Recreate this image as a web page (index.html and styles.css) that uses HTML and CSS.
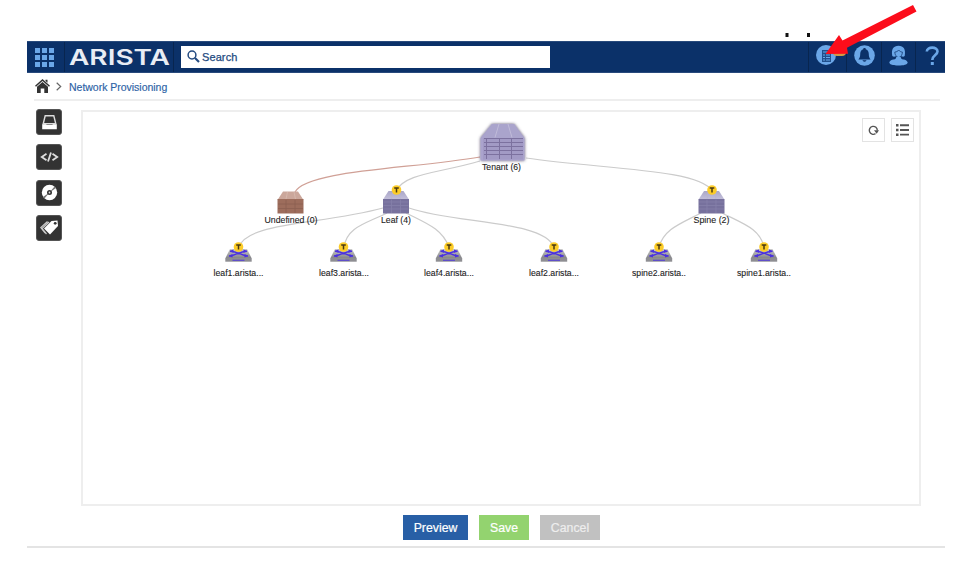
FILE: index.html
```html
<!DOCTYPE html>
<html lang="en">
<head>
<meta charset="utf-8">
<title>Network Provisioning</title>
<link rel="stylesheet" href="styles.css">
</head>
<body>
<div class="app">
  <header class="topbar">
    <div class="cell apps">
      <svg width="19" height="19" viewBox="0 0 19 19" fill="#6ba7e8"><path d="M0 0h5v5H0zM7 0h5v5H7zM14 0h5v5h-5zM0 7h5v5H0zM7 7h5v5H7zM14 7h5v5h-5zM0 14h5v5H0zM7 14h5v5H7zM14 14h5v5h-5z"/></svg>
    </div>
    <div class="cell brand">
      <svg width="108" height="30" viewBox="0 0 108 30"><text class="logo" x="4" y="22.500" textLength="101" lengthAdjust="spacingAndGlyphs">ARISTA</text></svg>
    </div>
    <div class="search">
      <svg width="13" height="13" viewBox="0 0 13 13" fill="none" stroke="#234a80"><circle cx="5" cy="5" r="3.900" stroke-width="1.500"/><path d="M8 8l4 4" stroke-width="2.200"/></svg>
      <span>Search</span>
    </div>
    <nav class="tools">
      <div class="cell tasks">
        <svg width="21" height="21" viewBox="0 0 21 21"><circle cx="10" cy="10" r="10" fill="#6ba7e8"/><path d="M6 5h9v12H6z" fill="#21508d"/><path d="M7 7h7M7 10h2m1 0h4M7 12.500h2m1 0h4M7 15h2m1 0h4" stroke="#6ba7e8"/></svg>
        <i class="badge"></i>
      </div>
      <div class="cell bell">
        <svg width="21" height="21" viewBox="0 0 21 21"><circle cx="10.500" cy="10.500" r="10.300" fill="#6ba7e8"/><path d="M10.500 3c.9 0 1.300.5 1.300 1.200 2.300.7 3 2.800 3 5.100 0 2.600.7 3.900 1.800 5.100H4.400c1.100-1.200 1.800-2.500 1.800-5.100 0-2.300.7-4.400 3-5.100C9.200 3.500 9.600 3 10.500 3zM8.500 15.300h4c-.2 1.900-3.800 1.900-4 0z" fill="#0b3169"/></svg>
      </div>
      <div class="cell user">
        <svg width="19" height="21" viewBox="0 0 19 21" fill="#6ba7e8"><path d="M.3 17.500c.5-2.500 4-3.500 9.200-3.500s8.700 1 9.200 3.500c-.5 2.300-4 3-9.200 3s-8.700-.7-9.200-3z"/><path d="M3.300 11C2 4 4.500.7 9.500.7S17 4 15.700 11c-1 .8-2 .8-3 .3h-6c-1.400.5-2.400.5-3.400-.3z"/><path d="M5.800 7c1.800 0 3-.7 3.900-2 .9 1.300 2 2 3.700 2 0 3-1.500 4.800-3.800 5.600C7.300 11.800 5.800 10 5.800 7z" stroke="#0b3169" stroke-width=".7"/><path d="M7.500 11.800h4l1.500 3.300-3.500 1.600L6 15.100z"/></svg>
      </div>
      <div class="cell help">
        <svg width="15" height="20" viewBox="0 0 15 20"><path d="M1.800 5.500C2 .4 12.600.2 12.500 5.500c0 3.500-5.200 3.500-5.200 8.500" fill="none" stroke="#6ba7e8" stroke-width="2.600"/><path d="M5.800 16h3v3h-3z" fill="#6ba7e8"/></svg>
      </div>
    </nav>
  </header>

  <div class="crumbs">
    <svg width="15" height="14" viewBox="0 0 15 14" fill="#333"><path d="M7.500 0l7.500 6.700-1 1.100-6.500-5.700L1 7.800 0 6.700zM10.500.8h2v3l-2-1.800zM7.500 3l5.500 4.700V14H9.300V9.500H5.700V14H2V7.700z"/></svg>
    <svg class="chevron" width="6" height="9" viewBox="0 0 6 9" fill="none" stroke="#666" stroke-width="1.200"><path d="M.7.800l4 3.700-4 3.700"/></svg>
    <a>Network Provisioning</a>
  </div>

  <main class="workspace">
    <aside class="side">
      <div class="tool"><svg width="17" height="17" viewBox="0 0 17 17"><path d="M4.200 1.800h8.600l2 8H2.200z" fill="#333" stroke="#ddd" stroke-width="1.400"/><path d="M1.200 10.200h3.900l.6.800h5.600l.6-.8h3.900v5H1.200z" fill="#fff"/></svg></div>
      <div class="tool"><svg width="19" height="12" viewBox="0 0 19 12" fill="none" stroke="#ddd" stroke-width="1.800"><path d="M6.500 2.800L1.800 6l4.700 3.200M12.500 2.800L17.200 6l-4.700 3.200M11 1.500l-3 9"/></svg></div>
      <div class="tool"><svg width="17" height="17" viewBox="0 0 17 17"><circle cx="8.500" cy="8.500" r="7.700" fill="#fff"/><path d="M8.500 8.500L15 4l-1.500-1.500zM8.500 8.500L2 13l1.500 1.500z" fill="#777"/><circle cx="8.500" cy="8.500" r="2.500" fill="#333"/><circle cx="8.500" cy="8.500" r=".9" fill="#ddd"/></svg></div>
      <div class="tool"><svg width="19" height="17" viewBox="0 0 19 17"><path d="M9 3L2 9.500 6.500 15M7.500 2.500L.8 8.500 5 14" fill="none" stroke="#ccc" stroke-width="1.200"/><path d="M11.500 2l6-.5.500 5.500-8 8.500L4 9.500z" fill="#fff"/><circle cx="15.200" cy="4.300" r="1.400" fill="#333"/></svg></div>
    </aside>

    <section class="canvas">
      <svg class="tree" viewBox="83 112 836 392">
        <defs>
          <linearGradient id="violet" x1="0" y1="0" x2="0" y2="1"><stop offset="0" stop-color="#aaa7c8"/><stop offset="1" stop-color="#c3bfda"/></linearGradient>
          <linearGradient id="metal" x1="0" y1="0" x2="0" y2="1"><stop offset="0" stop-color="#ccc"/><stop offset="1" stop-color="#858589"/></linearGradient>
          <filter id="glow" x="-20%" y="-20%" width="140%" height="140%"><feDropShadow dx="0" dy="0" stdDeviation="1.800" flood-color="#48415f" flood-opacity=".95"/></filter>
          <symbol id="rack" viewBox="0 0 27 23" overflow="visible">
            <path d="M6 0h15l5.500 8.500H.5z" fill="url(#violet)"/>
            <path d="M.5 8h26v14.500H.5z" fill="#77719d"/>
            <path d="M9 8.500v13.500M18 8.500v13.500M1 11h25M1 14.500h25M1 18h25" stroke="#8580aa" stroke-width=".8"/>
            <path d="M10.500.5L9 8M16.500.5L18 8" stroke="#b8b5d0" stroke-width=".7"/>
          </symbol>
          <symbol id="badge" viewBox="0 0 10 10" overflow="visible">
            <circle cx="5" cy="5" r="4.800" fill="#fccc28"/><path d="M2.700 3h4.600M5 3v4.500" stroke="#493a12" stroke-width="1.500"/>
          </symbol>
          <symbol id="switch" viewBox="0 0 27 19" overflow="visible">
            <path d="M5 6h17l4.500 9H.5z" fill="url(#metal)"/><path d="M.3 15h26.400v3.700H.3z" fill="#8e8e92"/>
            <path d="M4 13c6 0 10-4.800 18-4.800M5 8.200c8 0 12 4.800 18 4.800" fill="none" stroke="#4b31df" stroke-width="1.400"/>
            <path d="M3.500 13l4-2v3.500zM23.500 13l-4-2v3.500zM4.500 8l4-1.500v3.300zM22.500 8l-4-1.500v3.300z" fill="#4b31df"/>
            <path d="M7.500 17.300h12" stroke="#5c49d0" stroke-width="1.200"/>
            <use href="#badge" x="8.500" y="-1" width="10" height="10"/>
          </symbol>
        </defs>

        <g class="links">
          <path class="orphan" d="M480 157C410 169 307 170 295 192"/>
          <path d="M480 161C440 173 405 173 396 191"/>
          <path d="M526 158C600 169 700 169 712 191"/>
          <path d="M383 208C320 225 247 222 239 247"/>
          <path d="M387 213C365 224 347 227 344 247"/>
          <path d="M406 213C428 224 442 229 449 247"/>
          <path d="M409 208C455 224 543 220 554 247"/>
          <path d="M701 213C680 224 664 229 659 247"/>
          <path d="M722 213C744 224 760 229 764 247"/>
        </g>

        <g filter="url(#glow)">
          <path d="M492 124h22l10.500 14v22.500h-44V138z" fill="#aaa3cd"/>
          <path d="M492 124h22l9 14h-40z" fill="#aaa4cc"/>
          <path d="M499 124l-4 13.500M508 124l4 13.500" stroke="#c0bbd9"/>
          <path d="M483 138h40v21.500h-40z" fill="#a29ac5"/>
          <path d="M484 138.500h39M484 142.500h39M484 146.500h39M484 150.500h39M484 154.500h39M486.500 138v21M499.500 138v21M511.500 138v21" stroke="#7b719f"/>
        </g>

        <g>
          <path d="M283 191.500h15l5.500 8.500h-26z" fill="#cba79b"/>
          <path d="M277.500 199h26v14.500h-26z" fill="#9d6d5c"/>
          <path d="M286 200v13M295 200v13M278 204h25M278 208.500h25" stroke="#8c6051" stroke-width=".8"/>
          <path d="M287.500 192l-1.500 7M294 192l1.500 7" stroke="#dabdb2" stroke-width=".7"/>
        </g>
        <use href="#rack" x="382.500" y="191" width="27" height="23"/><use href="#badge" x="391.500" y="185" width="10" height="10"/>
        <use href="#rack" x="698" y="191" width="27" height="23"/><use href="#badge" x="707" y="185" width="10" height="10"/>
        <use href="#switch" x="225" y="243" width="27" height="19"/>
        <use href="#switch" x="330" y="243" width="27" height="19"/>
        <use href="#switch" x="435.500" y="243" width="27" height="19"/>
        <use href="#switch" x="540.500" y="243" width="27" height="19"/>
        <use href="#switch" x="645.500" y="243" width="27" height="19"/>
        <use href="#switch" x="750.500" y="243" width="27" height="19"/>

        <g class="labels">
          <text x="482" y="170" textLength="39" lengthAdjust="spacingAndGlyphs">Tenant (6)</text>
          <text x="264.500" y="223" textLength="53" lengthAdjust="spacingAndGlyphs">Undefined (0)</text>
          <text x="381" y="223" textLength="30" lengthAdjust="spacingAndGlyphs">Leaf (4)</text>
          <text x="693.500" y="223" textLength="36" lengthAdjust="spacingAndGlyphs">Spine (2)</text>
          <text x="213.500" y="276" textLength="50" lengthAdjust="spacingAndGlyphs">leaf1.arista...</text>
          <text x="319" y="276" textLength="50" lengthAdjust="spacingAndGlyphs">leaf3.arista...</text>
          <text x="424" y="276" textLength="50" lengthAdjust="spacingAndGlyphs">leaf4.arista...</text>
          <text x="529" y="276" textLength="50" lengthAdjust="spacingAndGlyphs">leaf2.arista...</text>
          <text x="632" y="276" textLength="54" lengthAdjust="spacingAndGlyphs">spine2.arista..</text>
          <text x="737" y="276" textLength="54" lengthAdjust="spacingAndGlyphs">spine1.arista..</text>
        </g>
      </svg>
      <div class="view-actions">
        <div class="action"><svg width="11" height="11" viewBox="0 0 11 11"><path d="M7.500 8.700A4 4 0 1 1 9.300 5.500" fill="none" stroke="#555" stroke-width="1.400"/><path d="M6 5.200h5L8.700 8.800z" fill="#555"/></svg></div>
        <div class="action"><svg width="13" height="12" viewBox="0 0 13 12" fill="#555"><path d="M0 0h2.500v2.500H0zM4 .3h9v1.900H4zM0 4.700h2.500v2.500H0zM4 5h9v1.900H4zM0 9.400h2.500v2.500H0zM4 9.700h9v1.900H4z"/></svg></div>
      </div>
    </section>
  </main>

  <footer class="buttons">
    <button class="preview">Preview</button>
    <button class="save">Save</button>
    <button class="cancel">Cancel</button>
  </footer>
</div>

<svg class="pointer" width="974" height="80" viewBox="0 0 974 80">
  <path d="M785.500 33h3v4h-3zM807 33h3v4h-3z" fill="#111"/>
  <path d="M913 5l3.500 6.500-69.500 36.300 1 6-22.500.2L839 35l3.500 5.500z" fill="#fc0d1b"/>
</svg>
</body>
</html>
```

FILE: styles.css
```css
* { box-sizing: border-box; }
body {
  margin: 0;
  background: #fff;
  font-family: "Liberation Sans", Arial, sans-serif;
  position: relative;
  height: 562px;
  overflow: hidden;
}
svg { display: block; flex: none; }

.app {
  margin: 41px 29px 0 27px;
  height: 507px;
  display: flex;
  flex-direction: column;
  border-bottom: 2px solid #e4e4e4;
}

.topbar {
  height: 32px;
  flex: none;
  display: flex;
  align-items: center;
  background: #0b3169;
  border-top: 1px solid #284a7c;
  border-bottom: 1px solid #284a7c;
}
.cell {
  height: 30px;
  display: flex;
  align-items: center;
  justify-content: center;
  border-right: 1px solid #08254f;
}
.apps { width: 38px; padding-right: 2px; }
.brand { width: 109px; }
.logo {
  font: 600 21px Inter, "Liberation Sans", Arial, sans-serif;
  fill: #e9edf4;
}
.search {
  width: 369px;
  height: 22px;
  margin-left: 7px;
  padding-left: 6px;
  display: flex;
  align-items: center;
  gap: 2px;
  background: #fff;
  color: #234a80;
  font-size: 11px;
  -webkit-text-stroke: .25px #234a80;
}
.search span { margin-top: -1px; letter-spacing: .1px; }
.search svg { margin-top: -2px; }
.tools { display: flex; margin-left: auto; }
.tasks { width: 39px; position: relative; padding-right: 3px; border-left: 1px solid #08254f; }
.badge {
  position: absolute;
  left: 24px;
  top: 5px;
  width: 13px;
  height: 9px;
  border-radius: 4px;
  background: #d39a43;
}
.bell { width: 35px; }
.user { width: 34px; }
.help { width: 29px; border-right: 0; padding-left: 3px; }
.tools svg { margin-top: -3px; }

.crumbs {
  height: 28px;
  flex: none;
  margin: 0 5px 0 7px;
  padding-left: 1px;
  display: flex;
  align-items: center;
  border-bottom: 2px solid #eee;
  font-size: 10.5px;
  color: #2c62a5;
}
.chevron { margin: 0 7px 0 6px; }
.crumbs a { letter-spacing: -.02px; margin-top: 1px; -webkit-text-stroke: .15px #2c62a5; }

.workspace {
  flex: none;
  display: flex;
  gap: 19px;
  padding: 8px 24px 0 9px;
}
.side { display: flex; flex-direction: column; gap: 9.3px; width: 26px; }
.tool {
  width: 26px;
  height: 26px;
  display: flex;
  align-items: center;
  justify-content: center;
  border-radius: 3px;
  background: #333;
  border: 1px solid #555;
}
.canvas {
  flex: 1;
  height: 396px;
  margin-top: 1px;
  border: 2px solid #eee;
  position: relative;
}
.tree { width: 100%; height: 100%; }
.links path { fill: none; stroke: #cbcbcb; stroke-width: 1.2; }
.links .orphan { stroke: #d0a096; }
.labels { font-size: 8.6px; fill: #222; stroke: #222; stroke-width: .1px; }

.view-actions {
  position: absolute;
  top: 6px;
  right: 5px;
  display: flex;
  gap: 6px;
}
.action {
  width: 23px;
  height: 24px;
  display: flex;
  align-items: center;
  justify-content: center;
  background: #fff;
  border: 1px solid #e3e3e3;
}

.buttons {
  display: flex;
  justify-content: center;
  gap: 11px;
  padding: 9px 0 0 30px;
  margin-right: -1px;
}
.buttons button {
  height: 25px;
  padding: 0;
  border: 0;
  color: #fff;
  font: 12.3px "Liberation Sans", Arial, sans-serif;
  -webkit-text-stroke: .2px currentColor;
}
.buttons .preview { width: 65px; background: #285fa6; }
.buttons .save { width: 50px; background: #93d36f; }
.buttons .cancel { width: 60px; background: #c1c1c1; color: #eee; }

.pointer { position: absolute; left: 0; top: 0; pointer-events: none; }
```
